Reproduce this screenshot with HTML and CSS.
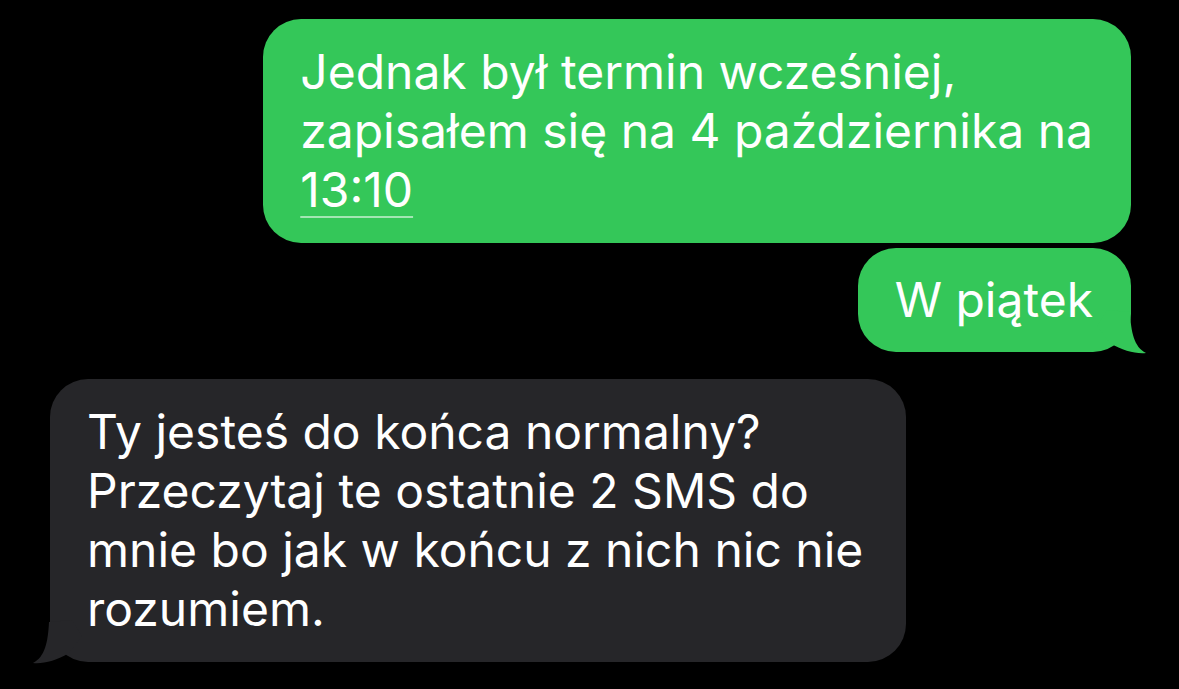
FILE: index.html
```html
<!DOCTYPE html>
<html lang="pl">
<head>
    <meta charset="UTF-8">
    <meta name="viewport" content="width=device-width, initial-scale=1.0">
    <title>Wiadomości</title>
    <link rel="stylesheet" href="styles.css">
</head>
<body>
    <div class="thread">
        <div class="bubble sent">
            Jednak był termin wcześniej,<br>
            zapisałem się na 4 października na<br>
            <span class="link">13:10</span>
        </div>

        <div class="bubble sent tail">
            W piątek
            <svg class="tail-shape" viewBox="0 0 60 50" aria-hidden="true">
                <path d="M43 8 C44 28 47 43 59 49 C49 50 36 47 23 39 L10 22 L20 6 Z"/>
            </svg>
        </div>

        <div class="bubble received tail">
            Ty jesteś do końca normalny?<br>
            Przeczytaj te ostatnie 2 SMS do<br>
            mnie bo jak w końcu z nich nic nie<br>
            rozumiem.
            <svg class="tail-shape" viewBox="0 0 60 50" aria-hidden="true">
                <path d="M43 8 C44 28 47 43 59 49 C49 50 36 47 23 39 L10 22 L20 6 Z"/>
            </svg>
        </div>
    </div>
</body>
</html>
```

FILE: styles.css
```css
* {
    margin: 0;
    padding: 0;
    box-sizing: border-box;
}

body {
    background: #000;
    font-family: Inter, 'Noto Sans', sans-serif;
    color: #fff;
    min-height: 100vh;
}

.thread {
    display: flex;
    flex-direction: column;
    padding: 19px 48px 0 50px;
}

.bubble {
    position: relative;
    font-size: 48px;
    line-height: 59px;
    padding: 23px 38px 24px 37px;
    border-radius: 38px;
    white-space: nowrap;
}

.sent {
    align-self: flex-end;
    background: #34c759;
}

.sent + .sent {
    margin-top: 5px;
    padding-top: 22px;
    padding-bottom: 23px;
}

.received {
    align-self: flex-start;
    background: #262629;
    margin-top: 27px;
    padding-right: 43px;
}

.link {
    text-decoration: underline;
    text-decoration-color: rgba(255, 255, 255, 0.55);
    text-decoration-thickness: 2px;
    text-underline-offset: 9px;
}

/* iMessage tail in the bottom corner */
.tail-shape {
    position: absolute;
    bottom: -2px;
    width: 60px;
    height: 50px;
}

.sent .tail-shape {
    right: -16px;
    fill: #34c759;
}

.received .tail-shape {
    left: -18px;
    fill: #262629;
    transform: scaleX(-1);
}
```
